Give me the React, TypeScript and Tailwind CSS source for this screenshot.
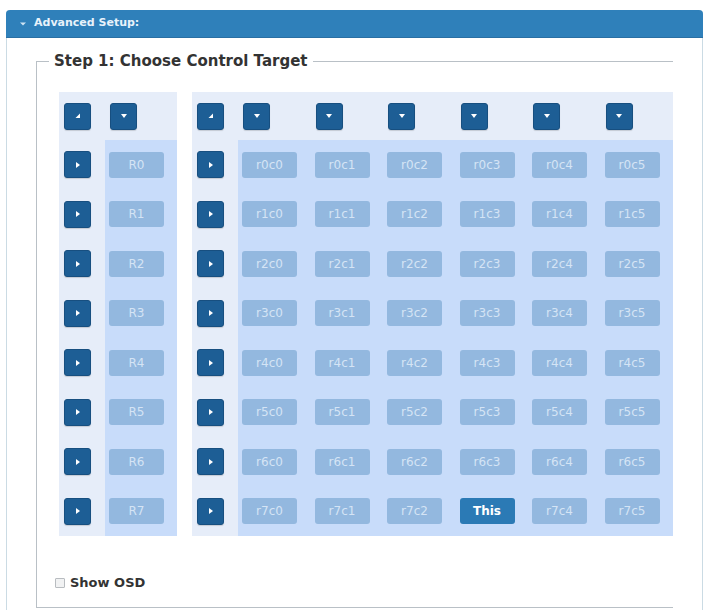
import React from "react";

const font = { fontFamily: '"DejaVu Sans", Verdana, sans-serif' };

type Arrow = "corner" | "down" | "right";

// tiny white triangle used on the selector buttons
function Tri({ dir }: { dir: Arrow }) {
  const pts =
    dir === "down" ? "0,1 6,1 3,5" : dir === "right" ? "1,0 5,3 1,6" : "5,0.5 5,5 0.5,5";
  return (
    <svg width="6" height="6" viewBox="0 0 6 6">
      <polygon points={pts} fill="#ffffff" />
    </svg>
  );
}

function PickButton({ dir }: { dir: Arrow }) {
  return (
    <button className="w-[27px] h-[27px] rounded-[3px] bg-[#1d5e95] border border-[#174f80] flex items-center justify-center shadow-[0_1px_1px_rgba(0,0,0,0.15)]">
      <Tri dir={dir} />
    </button>
  );
}

function Cell({ label, active }: { label: string; active?: boolean }) {
  return (
    <button
      className={
        active
          ? "w-[55px] h-[26px] rounded-[3px] bg-[#2b7ab5] text-white text-[12px] font-semibold"
          : "w-[55px] h-[26px] rounded-[3px] bg-[#93b8df] text-[#d5e4f5] text-[12px]"
      }
    >
      {label}
    </button>
  );
}

const rows = [0, 1, 2, 3, 4, 5, 6, 7];
const cols = [0, 1, 2, 3, 4, 5];

function RowTable() {
  return (
    <div className="w-[118px] bg-[#e6edf9] grid grid-cols-[46px_72px]">
      <div className="h-[48px] flex items-center pl-[5px]">
        <PickButton dir="corner" />
      </div>
      <div className="h-[48px] flex items-center pl-[5px]">
        <PickButton dir="down" />
      </div>
      {rows.map((r) => (
        <React.Fragment key={r}>
          <div className="h-[49.5px] flex items-center pl-[5px]">
            <PickButton dir="right" />
          </div>
          <div className="h-[49.5px] flex items-center pl-[4px] bg-[#c8dcfa]">
            <Cell label={`R${r}`} />
          </div>
        </React.Fragment>
      ))}
    </div>
  );
}

function CellTable() {
  return (
    <div className="w-[481px] bg-[#e6edf9] grid grid-cols-[46px_repeat(6,72.5px)]">
      <div className="h-[48px] flex items-center pl-[5px]">
        <PickButton dir="corner" />
      </div>
      {cols.map((c) => (
        <div key={c} className="h-[48px] flex items-center pl-[5px]">
          <PickButton dir="down" />
        </div>
      ))}
      {rows.map((r) => (
        <React.Fragment key={r}>
          <div className="h-[49.5px] flex items-center pl-[5px]">
            <PickButton dir="right" />
          </div>
          {cols.map((c) => (
            <div key={c} className="h-[49.5px] flex items-center pl-[4px] bg-[#c8dcfa]">
              <Cell label={r === 7 && c === 3 ? "This" : `r${r}c${c}`} active={r === 7 && c === 3} />
            </div>
          ))}
        </React.Fragment>
      ))}
    </div>
  );
}

export default function App() {
  return (
    <div className="w-[709px] h-[610px] bg-white overflow-hidden pt-[10px] pl-[6px]" style={font}>
      <div className="w-[697px] border-x border-[#cbdbe4] rounded-t-[4px] h-[640px]">
        {/* collapsible header */}
        <div className="h-[28px] -mx-px bg-[#2f80ba] rounded-t-[4px] border-b border-[#2a6fa3] flex items-center pl-[14px] gap-[8px]">
          <svg width="6" height="6" viewBox="0 0 6 6">
            <polygon points="0,1.5 6,1.5 3,4.5" fill="#cfe3f3" />
          </svg>
          <span className="text-[11px] font-bold text-[#e8f2fa]">Advanced Setup:</span>
        </div>

        <div className="pt-[14px] pl-[29px]">
          <fieldset className="w-[637px] border-t border-l border-b border-[#b9c0c6] pl-[22px] pb-[16px]">
            <legend className="-ml-[10px] px-[5px] text-[15px] font-bold text-[#333333] leading-[18px]">
              Step 1: Choose Control Target
            </legend>
            <div className="mt-[22px] flex gap-[15px]">
              <RowTable />
              <CellTable />
            </div>
            <label className="mt-[39px] -ml-[4px] flex items-center gap-[5px] h-[16px]">
              <span className="w-[10px] h-[10px] border border-[#b8bcc0] bg-[#f1f2f3] rounded-[1px]" />
              <span className="text-[13px] font-bold text-[#333333]">Show OSD</span>
            </label>
          </fieldset>
        </div>
      </div>
    </div>
  );
}
